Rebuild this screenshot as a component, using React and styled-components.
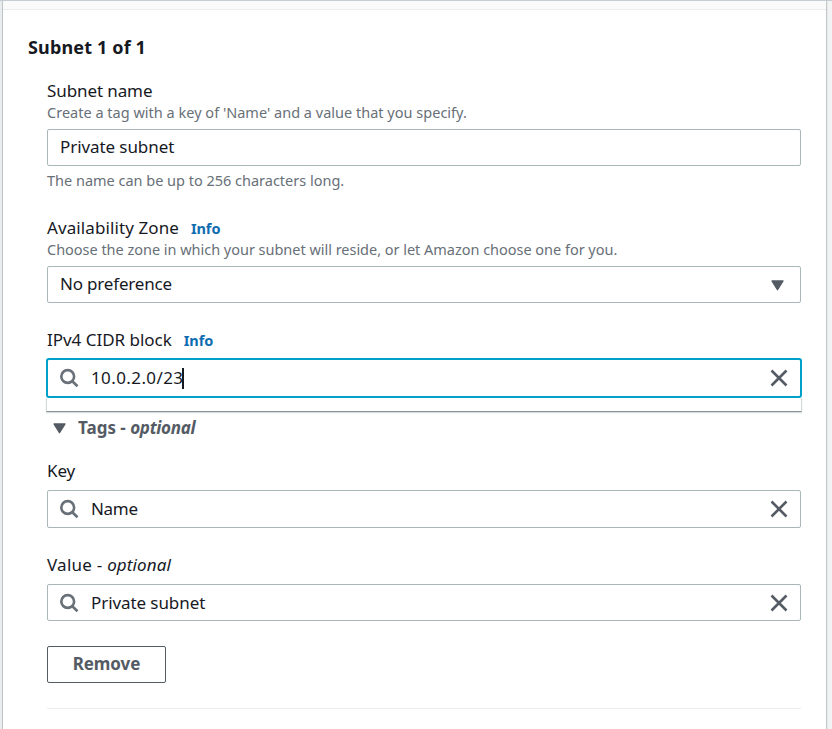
import React from 'react';
import styled, { createGlobalStyle } from 'styled-components';

const GlobalStyle = createGlobalStyle`
  *, *::before, *::after { box-sizing: border-box; }
  body {
    margin: 0;
    background: #f2f3f3;
    color: #16191f;
    font-family: "Noto Sans", "Open Sans", sans-serif;
    font-size: 17px;
    overflow: hidden;
  }
`;

const Page = styled.div`
  height: 729px;
  padding: 0 5px 0 2px;
  background: linear-gradient(to right, #eaeded 2px, #f2f3f3 2px);
  border-top: 1px solid #c5cdd2;
`;

const Panel = styled.section`
  height: 100%;
  background: #fff;
  border-left: 1px solid #bcc4c5;
  border-right: 1px solid #c2c9ca;
  box-shadow: 1px 0 0 #e6e9e9;
`;

const PanelTop = styled.div`
  height: 9px;
  background: #fafafa;
  border-bottom: 1px solid #eaeded;
`;

const Title = styled.h2`
  margin: 25px 0 0 25px;
  font-size: 18px;
  line-height: 24px;
  font-weight: 700;
  letter-spacing: 0.15px;
`;

const Form = styled.div`
  display: flex;
  flex-direction: column;
  margin: 21px 25px 0 44px;
`;

const Field = styled.div`
  display: flex;
  flex-direction: column;
  margin-bottom: ${p => p.$after}px;
`;

const Label = styled.div`
  display: flex;
  align-items: baseline;
  height: 22px;
  line-height: 22px;
  margin-bottom: ${p => p.$gap || 0}px;
  letter-spacing: ${p => p.$track || 0}px;
  white-space: pre;
`;

const InfoLink = styled.a`
  margin-left: 12px;
  color: #0f6cb0;
  font-size: 14.5px;
  font-weight: 700;
  letter-spacing: -0.1px;
`;

const Hint = styled.div`
  height: 20px;
  line-height: 20px;
  font-size: 14.5px;
  color: #687078;
  letter-spacing: ${p => p.$track || 0}px;
  margin-top: ${p => p.$top || 0}px;
  white-space: nowrap;
`;

const Control = styled.div`
  display: flex;
  align-items: center;
  height: ${p => p.$height || 37}px;
  margin-top: ${p => p.$top || 0}px;
  padding: 0 12px;
  background: #fff;
  border: 1px solid #aab7b8;
  border-radius: 2px;
`;

const FocusedControl = styled(Control)`
  height: 40px;
  margin: 0 -1px;
  border: 2px solid #00a1c9;
  border-radius: 3px;
`;

const Value = styled.span`
  flex: 1;
  line-height: 24px;
  padding-bottom: ${p => p.$lift || 0}px;
  letter-spacing: ${p => p.$track || 0}px;
`;

const Caret = styled.span`
  display: inline-block;
  width: 2px;
  height: 21px;
  margin-left: -1px;
  background: #16191f;
  vertical-align: -5px;
`;

const Suggestions = styled.div`
  height: 14px;
  margin: 0 -1px;
  background: #fff;
  border: 1px solid #d5dbdb;
  border-top: 0;
  border-bottom-color: #879596;
  box-shadow: 0 1px 1px rgba(0, 28, 36, 0.15);
`;

const TagsHeader = styled.div`
  display: flex;
  align-items: center;
  height: 22px;
  margin: 5px 0 21px 6px;
  line-height: 22px;
  font-weight: 700;
  color: #545b64;
  white-space: pre;
`;

const TagsText = styled.span`
  margin-left: 12px;
  letter-spacing: 0;
`;

const Optional = styled.em`
  letter-spacing: ${p => p.$track || 0}px;
`;

const RemoveButton = styled.button`
  width: 119px;
  height: 37px;
  padding: 0 0 1px;
  background: #fff;
  border: 1px solid #545b64;
  border-radius: 2px;
  color: #545b64;
  font: 700 17px/24px "Noto Sans", "Open Sans", sans-serif;
  letter-spacing: -0.05px;
`;

const Divider = styled.hr`
  width: 100%;
  height: 1px;
  margin: 25px 0 0;
  border: 0;
  background: #eaeded;
`;

const SearchSvg = styled.svg`
  width: 20px;
  height: 20px;
  margin-right: 11px;
  flex: none;
`;

const IconSvg = styled.svg`
  display: block;
  flex: none;
`;

function SearchIcon() {
  return (
    <SearchSvg viewBox="0 0 20 20" fill="none" stroke="#687078" strokeWidth="2.6">
      <circle cx="7.7" cy="8.5" r="6.4" />
      <path d="M12.3 13.2 17.5 18.3" />
    </SearchSvg>
  );
}

function CloseIcon() {
  return (
    <IconSvg width="18" height="18" viewBox="0 0 18 18" fill="none" stroke="#545b64" strokeWidth="2.6">
      <path d="M1.5 1.5 16.5 16.5M16.5 1.5 1.5 16.5" />
    </IconSvg>
  );
}

function DownIcon() {
  return (
    <IconSvg width="13" height="11" viewBox="0 0 13 11" fill="#545b64" stroke="#545b64" strokeWidth="1.4" strokeLinejoin="round">
      <path d="M1 1h11L6.5 9.7z" />
    </IconSvg>
  );
}

const SelectArrow = styled.span`
  margin: 1px 4px 0 0;
`;

function SearchField({ value, lift, track, height }) {
  return (
    <Control $height={height}>
      <SearchIcon />
      <Value $lift={lift} $track={track}>{value}</Value>
      <CloseIcon />
    </Control>
  );
}

export default function App() {
  return (
    <>
      <GlobalStyle />
      <Page>
        <Panel>
          <PanelTop />
          <Title>Subnet 1 of 1</Title>
          <Form>
            <Field $after={27}>
              <Label $track={-0.1}>Subnet name</Label>
              <Hint $track={0.01}>Create a tag with a key of 'Name' and a value that you specify.</Hint>
              <Control $top={7}>
                <Value $lift={2} $track={-0.08}>Private subnet</Value>
              </Control>
              <Hint $top={4} $track={-0.01}>The name can be up to 256 characters long.</Hint>
            </Field>

            <Field $after={26}>
              <Label $track={0.1}>
                Availability Zone<InfoLink>Info</InfoLink>
              </Label>
              <Hint $track={-0.025}>Choose the zone in which your subnet will reside, or let Amazon choose one for you.</Hint>
              <Control $top={7}>
                <Value $lift={2} $track={-0.18}>No preference</Value>
                <SelectArrow><DownIcon /></SelectArrow>
              </Control>
            </Field>

            <Field $after={0}>
              <Label $gap={7} $track={-0.02}>
                IPv4 CIDR block<InfoLink>Info</InfoLink>
              </Label>
              <FocusedControl>
                <SearchIcon />
                <Value $track={0.4}>10.0.2.0/23<Caret /></Value>
                <CloseIcon />
              </FocusedControl>
              <Suggestions />
            </Field>

            <TagsHeader>
              <DownIcon />
              <TagsText>Tags - <Optional $track={-0.3}>optional</Optional></TagsText>
            </TagsHeader>

            <Field $after={26}>
              <Label $gap={8} $track={-0.1}>Key</Label>
              <SearchField value="Name" height={38} track={-0.3} />
            </Field>

            <Field $after={25}>
              <Label $gap={8} $track={0.25}>Value - <Optional $track={0.1}>optional</Optional></Label>
              <SearchField value="Private subnet" track={-0.08} />
            </Field>

            <RemoveButton>Remove</RemoveButton>
            <Divider />
          </Form>
        </Panel>
      </Page>
    </>
  );
}
